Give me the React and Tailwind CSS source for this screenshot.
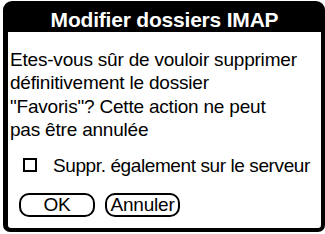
const FONT = "font-['Liberation_Sans',Arial,sans-serif]";

function Button({ label, className }) {
    return (
        <div
            className={`h-[24px] border-2 border-black rounded-[10px] flex items-center justify-center text-[19px] tracking-[-0.2px] leading-[20px] text-black ${className}`}
        >
            {label}
        </div>
    );
}

export default function App() {
    return (
        <div className={`w-[325px] h-[234px] bg-white overflow-hidden pl-[3px] pt-px ${FONT}`}>
            {/* dialog frame */}
            <div className="w-[322px] h-[231px] bg-black rounded-t-[9px] rounded-b-[7px] flex flex-col pl-[5px] pr-[4px] pb-[4px]">
                {/* title bar */}
                <div className="h-[31px] shrink-0 pt-[8px] text-center text-white font-bold text-[21px] tracking-[-0.2px] leading-[21px]">
                    Modifier dossiers IMAP
                </div>

                {/* body */}
                <div className="flex-1 bg-white rounded-b-[3px] pl-[2px] flex flex-col">
                    <p className="pt-[16px] text-[19px] tracking-[-0.2px] leading-[23.4px] text-black">
                        Etes-vous sûr de vouloir supprimer
                        <br />
                        définitivement le dossier
                        <br />
                        "Favoris"? Cette action ne peut
                        <br />
                        pas être annulée
                    </p>

                    <div className="mt-[12px] h-[23.4px] flex items-center pl-[13px] gap-[16px]">
                        <div className="w-[14px] h-[14px] border-2 border-black" />
                        <span className="text-[19px] tracking-[-0.4px] leading-[23.4px] text-black">
                            Suppr. également sur le serveur
                        </span>
                    </div>

                    <div className="mt-[15.6px] flex pl-[9px] gap-[10px]">
                        <Button label="OK" className="w-[76px]" />
                        <Button label="Annuler" className="w-[75px]" />
                    </div>
                </div>
            </div>
        </div>
    );
}
